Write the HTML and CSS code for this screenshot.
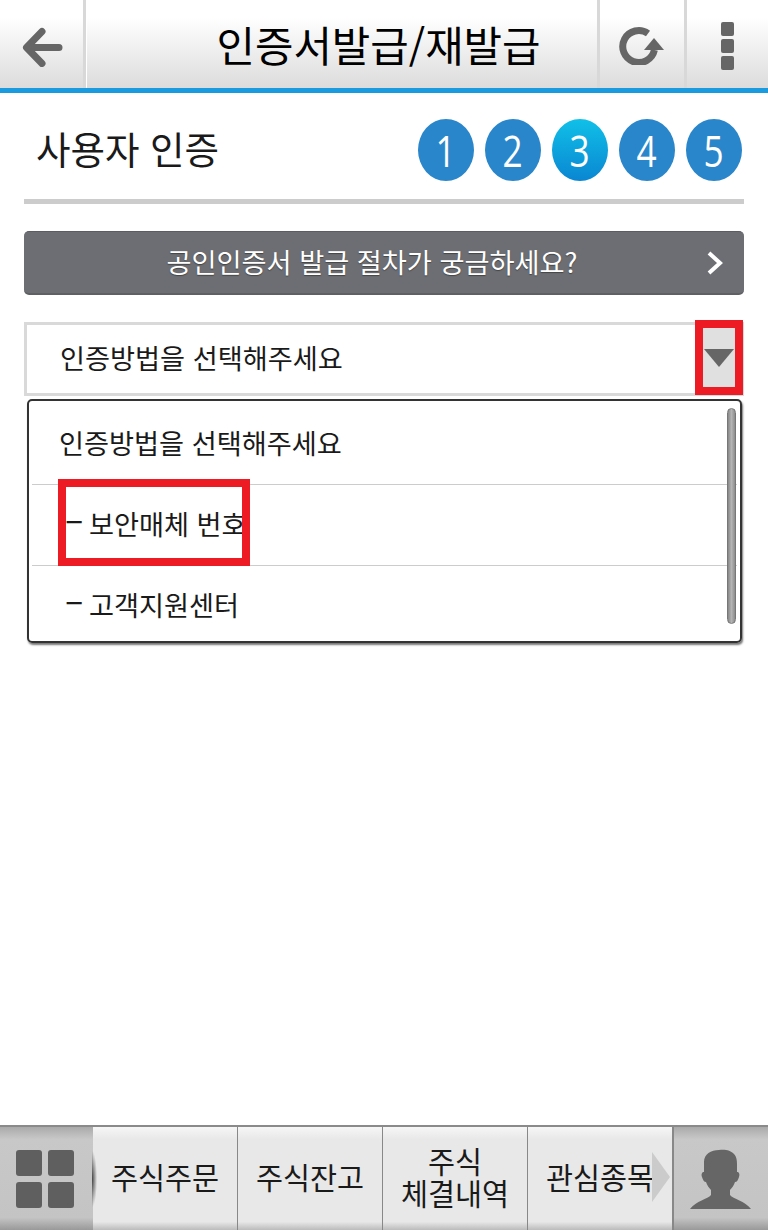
FILE: index.html
```html
<!doctype html>
<html lang="ko">
  <head>
    <meta charset="utf-8">
    <title>인증서발급/재발급</title>
    <link rel="stylesheet" href="styles.css">
  </head>
  <body>
    <header class="topbar">
      <div class="topbar-btn back">
        <svg width="46" height="46" viewBox="0 0 46 46"><path d="M40 26.5H8M23 10.5 7.5 26.5l15.5 16" fill="none" stroke="#666" stroke-width="7" stroke-linecap="round" stroke-linejoin="round"/></svg>
      </div>
      <h1>인증서발급/재발급</h1>
      <div class="topbar-btn refresh">
        <svg width="48" height="42" viewBox="0 0 48 42"><path d="M30 10.5A16 16 0 1 0 36.4 27" fill="none" stroke="#666" stroke-width="7"/><path d="M26 27 36 15l10 12z" fill="#666"/></svg>
      </div>
      <div class="topbar-btn more">
        <span></span><span></span><span></span>
      </div>
    </header>

    <section class="title-row">
      <h2>사용자 인증</h2>
      <ol class="steps">
        <li><span>1</span></li>
        <li><span>2</span></li>
        <li class="on"><span>3</span></li>
        <li><span>4</span></li>
        <li><span>5</span></li>
      </ol>
    </section>

    <div class="guide">
      <span>공인인증서 발급 절차가 궁금하세요?</span>
      <svg class="guide-arrow" width="18" height="26" viewBox="0 0 18 26"><path d="M3 3l11 10L3 23" fill="none" stroke="#fff" stroke-width="4"/></svg>
    </div>

    <div class="select">
      <span>인증방법을 선택해주세요</span>
      <div class="select-btn"><i></i></div>
    </div>

    <div class="dropdown">
      <ul>
        <li>인증방법을 선택해주세요</li>
        <li><b>–</b> 보안매체 번호</li>
        <li><b>–</b> 고객지원센터</li>
      </ul>
      <div class="scrollbar"></div>
      <div class="mark"></div>
    </div>

    <nav class="bottombar">
      <div class="side-btn grid-btn">
        <div class="squares"><i></i><i></i><i></i><i></i></div>
      </div>
      <div class="tab">주식주문</div>
      <div class="tab">주식잔고</div>
      <div class="tab">주식<br>체결내역</div>
      <div class="tab">관심종목<i class="tab-next"></i></div>
      <div class="side-btn user-btn">
        <svg width="64" height="62" viewBox="0 0 64 62"><path d="M15 14C15 6 22 2 30 2c5-1 12 0 15 4 3 3 3 8 3 10l0 8c2 0 3 2 2 5-1 3-2 5-4 5-1 3-3 6-5 8v5c3 4 15 6 21 14H1c6-8 18-10 21-14v-5c-2-2-4-5-5-8-2 0-3-2-4-5-1-3 0-5 2-5z" fill="#666"/></svg>
      </div>
    </nav>
  </body>
</html>
```

FILE: styles.css
```css
html, body { margin: 0; padding: 0; }
body {
  width: 768px;
  height: 1230px;
  position: relative;
  overflow: hidden;
  background: #fff;
  color: #1a1a1a;
  font-family: "Noto Sans CJK KR", "Noto Sans", sans-serif;
}
h1, h2, ul, ol { margin: 0; padding: 0; list-style: none; font-weight: 400; }

.topbar {
  display: flex;
  height: 88px;
  border-bottom: 5px solid #1a9be0;
  background: linear-gradient(#fff 20%, #dcdcdc);
}
.topbar h1 {
  flex: 1;
  box-sizing: border-box;
  padding-left: 74px;
  text-align: center;
  font-size: 41.8px;
  line-height: 88px;
  color: #000;
  border-left: 3px solid #d8d8d8;
  box-shadow: inset 1px 0 0 #fff;
}
.topbar-btn {
  display: flex;
  align-items: center;
  justify-content: center;
  box-sizing: border-box;
  border-left: 3px solid #d8d8d8;
}
.back { width: 83px; border-left: 0; }
.refresh { width: 87px; }
.more { width: 84px; flex-direction: column; gap: 3px; padding-top: 3px; }
.more span { width: 13px; height: 14px; border-radius: 2px; background: #666; }

.title-row {
  display: flex;
  align-items: center;
  justify-content: space-between;
  height: 106px;
  margin: 0 24px;
  padding: 0 2px 0 12px;
  border-bottom: 5px solid #ccc;
}
.title-row h2 { margin-top: 2px; font-size: 37.5px; color: #1a1a1a; }
.steps { display: flex; gap: 11px; margin-top: 8px; }
.steps li {
  width: 56px;
  height: 62px;
  border-radius: 50%;
  background: #2a86cb;
  color: #fff;
  text-align: center;
  font: 400 44px/62px "Open Sans", sans-serif;
}
.steps li span { display: inline-block; transform: scaleX(.8); }
.steps li.on { background: linear-gradient(#10c0e8, #0a86d2); }

.guide {
  display: flex;
  align-items: center;
  justify-content: center;
  position: relative;
  box-sizing: border-box;
  height: 64px;
  margin: 27px 24px 0;
  padding-bottom: 4px;
  border-radius: 5px;
  border-top: 1px solid #5c5d61;
  border-bottom: 2px solid #5f6064;
  background: #6d6e73;
  color: #fff;
  font-size: 27.2px;
  text-shadow: 0 1px 1px #444;
}
.guide span { margin-right: 24px; }
.guide-arrow { position: absolute; right: 20px; top: 18px; }

.select {
  position: relative;
  box-sizing: border-box;
  height: 74px;
  margin: 27px 24px 0;
  border: 3px solid #d9d9d9;
  font-size: 27.2px;
  line-height: 64px;
  padding-left: 33px;
}
.select-btn {
  position: absolute;
  right: -2px;
  top: -5px;
  box-sizing: border-box;
  width: 48px;
  height: 75px;
  border: 8px solid #ed1c24;
  background: #e0e0e0;
}
.select-btn i {
  position: absolute;
  left: 1px;
  top: 21px;
  width: 0;
  height: 0;
  border-left: 15px solid transparent;
  border-right: 15px solid transparent;
  border-top: 18px solid #666;
}

.dropdown {
  position: relative;
  box-sizing: border-box;
  height: 244px;
  margin: 3px 26px 0 27px;
  padding: 0 3px;
  border: 2px solid #333;
  border-radius: 5px;
  box-shadow: 1px 2px 2px #777;
  font-size: 27.2px;
}
.dropdown li {
  box-sizing: border-box;
  height: 81px;
  padding-left: 27px;
  line-height: 76px;
  border-bottom: 1px solid #ccc;
}
.dropdown li:first-child { height: 84px; line-height: 82px; }
.dropdown li:last-child { border-bottom: 0; line-height: 77px; }
.dropdown li b { font-weight: 400; font-size: 34px; line-height: 1; margin: 0 -2px 0 6px; }
.scrollbar {
  position: absolute;
  right: 4px;
  top: 7px;
  width: 9px;
  height: 216px;
  box-sizing: border-box;
  border-radius: 5px;
  border: 1px solid #777;
  background: linear-gradient(90deg, #888, #b4b4b4 50%, #8c8c8c);
}
.mark {
  position: absolute;
  left: 29px;
  top: 78px;
  box-sizing: border-box;
  width: 192px;
  height: 87px;
  border: 8px solid #ed1c24;
}

.bottombar {
  position: absolute;
  left: 0;
  right: 0;
  bottom: 0;
  display: flex;
  height: 105px;
  box-sizing: border-box;
  border-top: 2px solid #8a8a8a;
  background: #e8e8e8;
}
.side-btn {
  display: flex;
  align-items: center;
  justify-content: center;
  flex: none;
  background: linear-gradient(#aaa, #c8c8c8 12%, #c4c4c4 88%, #999);
}
.grid-btn { position: relative; z-index: 1; box-sizing: border-box; width: 93px; padding-right: 3px; }
.grid-btn::after {
  content: "";
  position: absolute;
  left: 92px;
  top: 24px;
  width: 5px;
  height: 56px;
  background: radial-gradient(ellipse at left, #444, transparent 72%);
}
.user-btn { width: 95px; border-left: 1px solid #888; box-sizing: border-box; }
.squares { display: grid; grid-template-columns: 26px 26px; gap: 6px; }
.squares i { height: 26px; border-radius: 3px; background: #5f5f5f; }
.tab {
  display: flex;
  align-items: center;
  justify-content: center;
  position: relative;
  box-sizing: border-box;
  width: 145px;
  flex: none;
  border-right: 1px solid #888;
  background: linear-gradient(#f6f6f6, #e8e8e8 12%, #e8e8e8 92%, #bbb);
  font-size: 29.4px;
  line-height: 32px;
  text-align: center;
  color: #1a1a1a;
  padding-bottom: 5px;
}
.tab-next {
  position: absolute;
  right: 2px;
  top: 25px;
  width: 0;
  height: 0;
  border-top: 25px solid transparent;
  border-bottom: 25px solid transparent;
  border-left: 18px solid #cbcbcb;
}
```
